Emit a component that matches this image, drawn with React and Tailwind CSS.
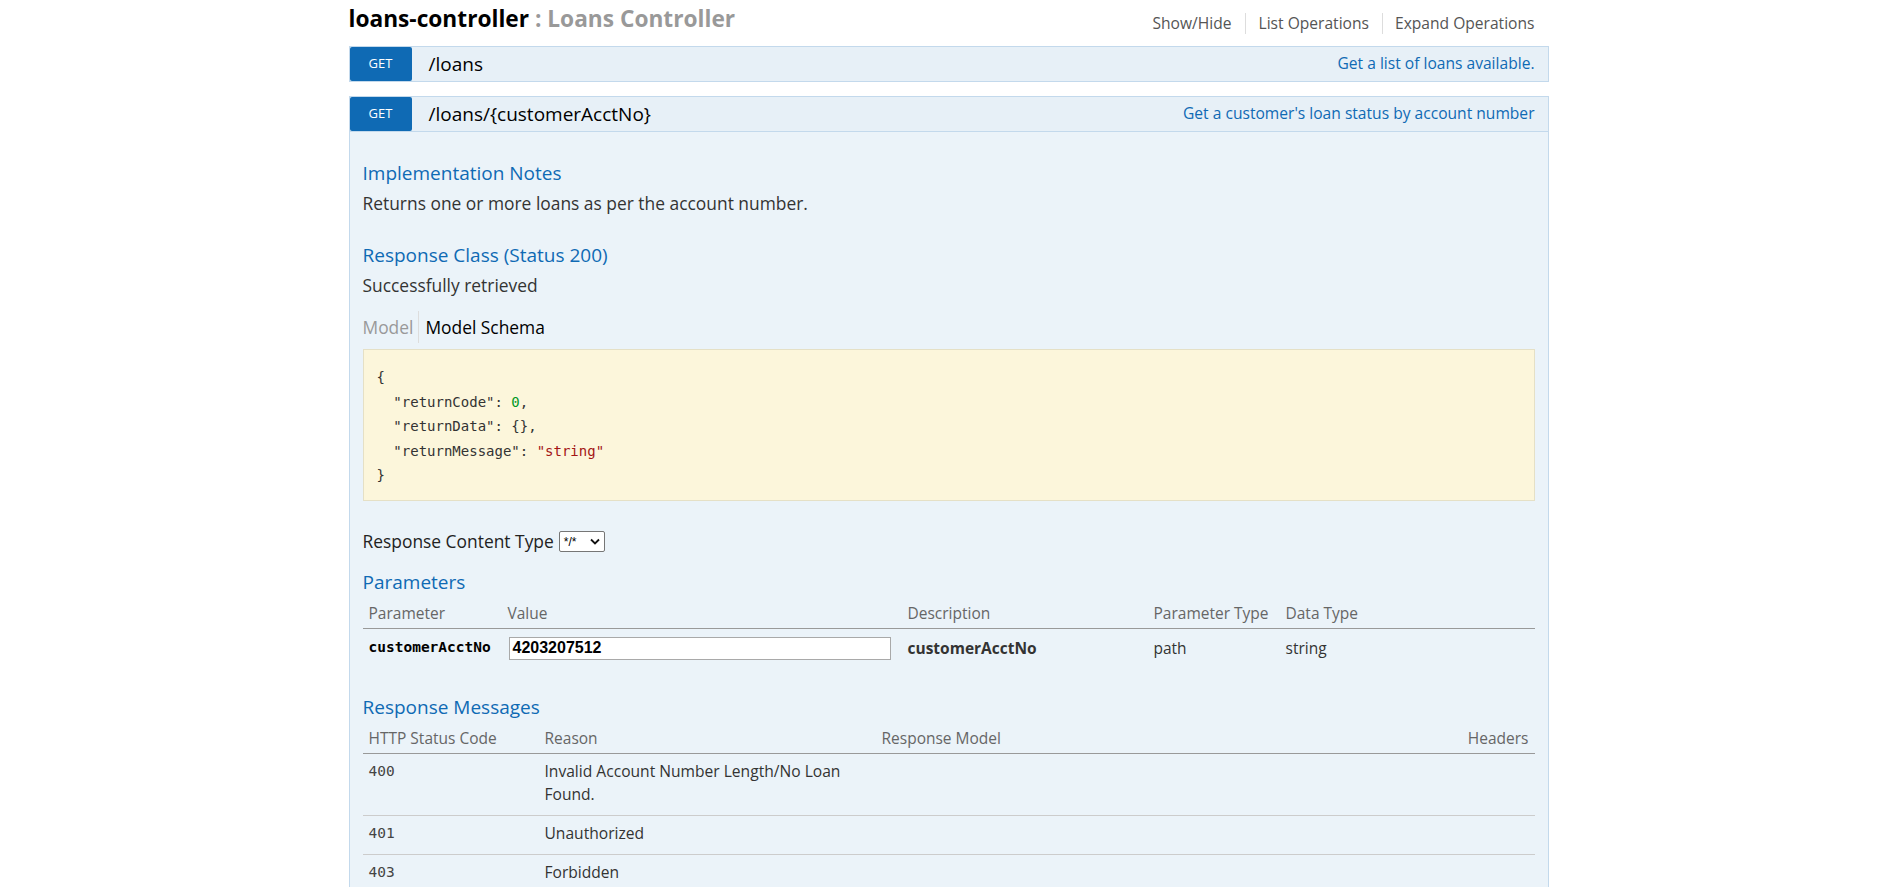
import React from "react";

const sans = "font-['Open_Sans','Noto_Sans',sans-serif]";
const mono = "font-['DejaVu_Sans_Mono','Liberation_Mono',monospace]";

function Bar({ path, desc }) {
  return (
    <div className="flex h-[36px] items-stretch border border-[#c3d9ec] bg-[#e7f0f7]">
      <span className="flex w-[62px] items-center justify-center rounded-[2px] bg-[#0f6ab4] text-[13px] text-white">
        GET
      </span>
      <span className="ml-[17px] flex items-center text-[19px] text-black">{path}</span>
      <span className="ml-auto flex items-center pr-[13px] text-[15.6px] text-[#0f6ab4]">{desc}</span>
    </div>
  );
}

export default function App() {
  return (
    <div className={`min-h-screen bg-white ${sans}`}>
      <div className="mx-auto w-[1200px]">
        {/* resource heading */}
        <div className="flex h-[38px] justify-between">
          <h2 className="text-[22.7px] font-bold leading-[38px]">
            <span className="text-black">loans-controller</span>
            <span className="text-[#999]"> : Loans Controller</span>
          </h2>
          <ul className="flex items-start pt-[13px]">
            <li className="flex h-[21px] items-center border-r border-[#ddd] px-[13px] text-[15.6px] text-[#555]">
              Show/Hide
            </li>
            <li className="flex h-[21px] items-center border-r border-[#ddd] px-[13px] text-[15.6px] text-[#555]">
              List Operations
            </li>
            <li className="flex h-[21px] items-center pl-[12px] pr-[14px] text-[15.6px] text-[#555]">
              Expand Operations
            </li>
          </ul>
        </div>

        <div className="mt-[8px]">
          <Bar path="/loans" desc="Get a list of loans available." />
        </div>

        <div className="mt-[14px]">
          <Bar path="/loans/{customerAcctNo}" desc="Get a customer's loan status by account number" />
          <div className="border-x border-b border-[#c3d9ec] bg-[#ebf3f9] px-[13px] pb-[40px] pt-[29px]">
            <h4 className="text-[19px] leading-[24px] text-[#0f6ab4]">Implementation Notes</h4>
            <p className="mt-[6px] text-[17.4px] leading-[24px] text-[#333]">
              Returns one or more loans as per the account number.
            </p>

            <h4 className="mt-[28px] text-[19px] leading-[24px] text-[#0f6ab4]">Response Class (Status 200)</h4>
            <p className="mt-[6px] text-[17.4px] leading-[24px] text-[#333]">Successfully retrieved</p>

            <div className="mt-[14px] flex h-[32px] items-stretch text-[17.4px]">
              <span className="flex items-center pr-[5px] text-[#999]">Model</span>
              <span className="flex items-center border-l border-[#ddd] pl-[6px] text-black">Model Schema</span>
            </div>

            <div className="mt-[6px] border border-[#e5e0c6] bg-[#fcf6db] pb-[12px] pl-[13px] pt-[15px]">
              <pre className={`${mono} text-[14px] leading-[24.5px] text-[#333]`}>
                {"{\n"}
                {'  "returnCode": '}
                <span className="text-[#009926]">0</span>
                {",\n"}
                {'  "returnData": {},\n'}
                {'  "returnMessage": '}
                <span className="text-[#a31515]">"string"</span>
                {"\n}"}
              </pre>
            </div>

            <div className="mt-[29px] flex h-[24px] items-center text-[17.4px] text-[#222]">
              <span>Response Content Type</span>
              <span className="ml-[5px] flex h-[21px] w-[46px] items-center justify-between rounded-[2px] border border-[#767676] bg-white pl-[4px] pr-[4px] font-['Liberation_Sans',sans-serif] text-[12px] text-black">
                <span>*/*</span>
                <svg width="10" height="7" viewBox="0 0 10 7">
                  <path d="M1 1.5 L5 5.5 L9 1.5" fill="none" stroke="#111" strokeWidth="1.8" />
                </svg>
              </span>
            </div>

            <h4 className="mt-[16px] text-[19px] leading-[24px] text-[#0f6ab4]">Parameters</h4>
            <table className="w-full table-fixed border-collapse">
              <colgroup>
                <col className="w-[139px]" />
                <col className="w-[400px]" />
                <col className="w-[246px]" />
                <col className="w-[132px]" />
                <col />
              </colgroup>
              <thead>
                <tr className="border-b border-[#999]">
                  {["Parameter", "Value", "Description", "Parameter Type", "Data Type"].map((h) => (
                    <th
                      key={h}
                      className="px-[6px] pb-[3px] pt-[7px] text-left text-[15.5px] font-normal leading-[24px] text-[#666]"
                    >
                      {h}
                    </th>
                  ))}
                </tr>
              </thead>
              <tbody>
                <tr>
                  <td className={`px-[6px] py-[8px] ${mono} text-[14.5px] font-bold text-black`}>customerAcctNo</td>
                  <td className="py-[8px] pl-[7px] pr-[10px]">
                    <div className="flex h-[23px] w-[382px] items-center border border-[#a9a9a9] bg-white px-[3px] font-['Liberation_Sans',sans-serif] text-[16px] font-bold text-black">
                      4203207512
                    </div>
                  </td>
                  <td className="px-[6px] py-[8px] text-[15.5px] font-bold text-[#333]">customerAcctNo</td>
                  <td className="px-[6px] py-[8px] text-[15.5px] text-[#333]">path</td>
                  <td className="px-[6px] py-[8px] text-[15.5px] text-[#333]">string</td>
                </tr>
              </tbody>
            </table>

            <h4 className="mt-[27px] text-[19px] leading-[24px] text-[#0f6ab4]">Response Messages</h4>
            <table className="w-full table-fixed border-collapse">
              <colgroup>
                <col className="w-[176px]" />
                <col className="w-[337px]" />
                <col className="w-[500px]" />
                <col />
              </colgroup>
              <thead>
                <tr className="border-b border-[#999]">
                  <th className="px-[6px] pb-[3px] pt-[7px] text-left text-[15.5px] font-normal leading-[24px] text-[#666]">
                    HTTP Status Code
                  </th>
                  <th className="px-[6px] pb-[3px] pt-[7px] text-left text-[15.5px] font-normal leading-[24px] text-[#666]">
                    Reason
                  </th>
                  <th className="px-[6px] pb-[3px] pt-[7px] text-left text-[15.5px] font-normal leading-[24px] text-[#666]">
                    Response Model
                  </th>
                  <th className="px-[6px] pb-[3px] pt-[7px] text-right text-[15.5px] font-normal leading-[24px] text-[#666]">
                    Headers
                  </th>
                </tr>
              </thead>
              <tbody>
                {[
                  ["400", "Invalid Account Number Length/No Loan Found."],
                  ["401", "Unauthorized"],
                  ["403", "Forbidden"],
                ].map(([code, reason]) => (
                  <tr key={code} className="border-b border-[#ccc]">
                    <td className={`px-[6px] pb-[9px] pt-[6px] align-top ${mono} text-[14.5px] leading-[23px] text-[#444]`}>
                      {code}
                    </td>
                    <td className="px-[6px] pb-[9px] pt-[6px] align-top text-[15.6px] leading-[23px] text-[#333]">
                      {reason}
                    </td>
                    <td className="px-[6px] pb-[9px] pt-[6px]" />
                    <td className="px-[6px] pb-[9px] pt-[6px]" />
                  </tr>
                ))}
              </tbody>
            </table>
          </div>
        </div>
      </div>
    </div>
  );
}
